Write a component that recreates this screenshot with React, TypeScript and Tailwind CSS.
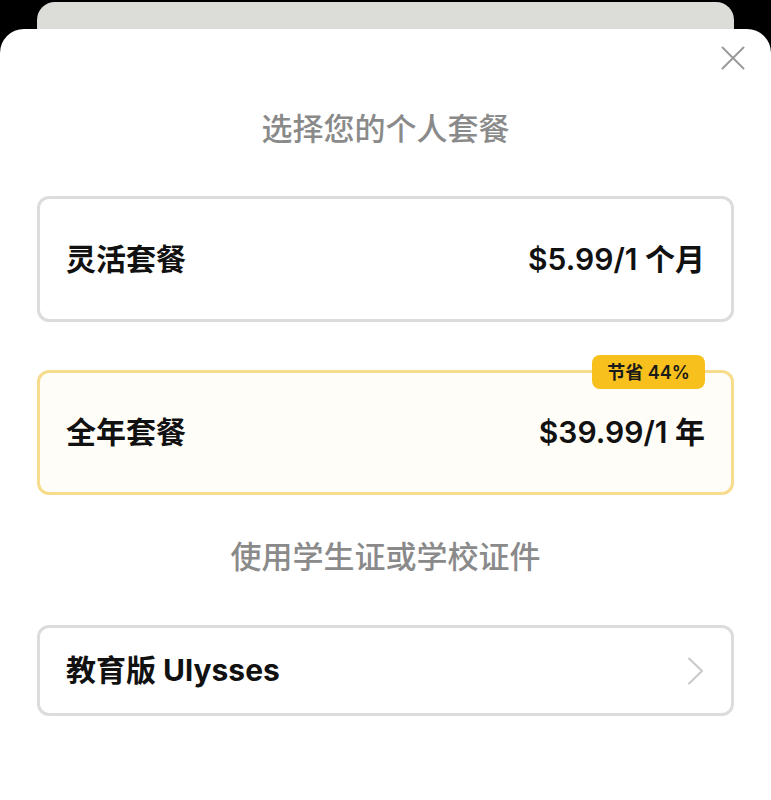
const FONT = 'font-["Inter","Noto_Sans_CJK_SC",sans-serif]'

function CloseIcon() {
  return (
    <svg width="24" height="24" viewBox="0 0 24 24" fill="none" aria-hidden>
      <path d="M1.5 1.5 L22.5 22.5 M22.5 1.5 L1.5 22.5" stroke="#9a9a9a" strokeWidth="2" strokeLinecap="round" />
    </svg>
  )
}

function Chevron() {
  return (
    <svg width="17" height="28" viewBox="0 0 17 28" fill="none" aria-hidden>
      <path d="M2 1.5 L15 14 L2 26.5" stroke="#c9c9c9" strokeWidth="2" strokeLinecap="round" strokeLinejoin="round" />
    </svg>
  )
}

export default function App() {
  return (
    <div className={`${FONT} bg-black w-[771px] h-[800px] flex flex-col overflow-hidden`}>
      {/* card peeking behind the sheet */}
      <div className="mx-[37px] mt-[2px] h-[27px] shrink-0 rounded-t-[18px] bg-[#dcdcd8]" />

      {/* sheet */}
      <div className="relative flex-1 rounded-t-[24px] bg-white px-[37px] pt-[80px]">
        <button className="absolute top-[17px] right-[26px] p-0">
          <CloseIcon />
        </button>

        <h1 className="text-center text-[31px] leading-[40px] font-medium text-[#8a8a8a]">
          选择您的个人套餐
        </h1>

        <div className="mt-[47px] h-[126px] rounded-[12px] border-[3px] border-[#dcdcdc] bg-white px-[26px] flex items-center justify-between">
          <span className="text-[30px] font-bold text-[#111]">灵活套餐</span>
          <span className="text-[30px] font-semibold text-[#111]">$5.99/1&nbsp;个月</span>
        </div>

        <div className="relative mt-[48px] h-[125px] rounded-[12px] border-[3px] border-[#f6dc8c] bg-[#fffdf8] px-[26px] flex items-center justify-between">
          <span className="absolute -top-[18px] right-[26px] h-[34px] w-[113px] rounded-[8px] bg-[#f7c01c] flex items-center justify-center text-[18px] font-semibold text-[#1a1a1a]">
            节省 44%
          </span>
          <span className="text-[30px] font-bold text-[#111]">全年套餐</span>
          <span className="text-[30px] font-semibold text-[#111]">$39.99/1&nbsp;年</span>
        </div>

        <h2 className="mt-[42px] text-center text-[31px] leading-[40px] font-medium text-[#8a8a8a]">
          使用学生证或学校证件
        </h2>

        <div className="mt-[48px] h-[91px] rounded-[12px] border-[3px] border-[#dcdcdc] bg-white pl-[26px] pr-[27px] flex items-center justify-between">
          <span className="text-[30px] font-bold text-[#111]">教育版 Ulysses</span>
          <Chevron />
        </div>
      </div>
    </div>
  )
}
